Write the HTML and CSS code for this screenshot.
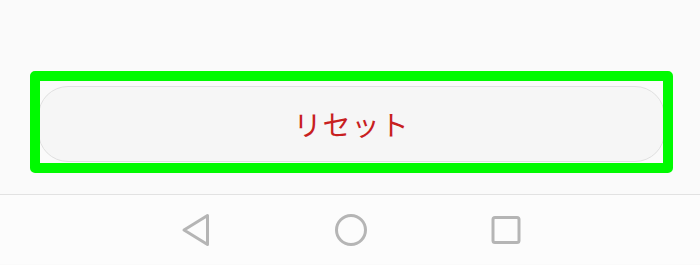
FILE: index.html
```html
<!DOCTYPE html>
<html lang="ja">
<head>
<meta charset="utf-8">
<title>リセット</title>
<link rel="stylesheet" href="styles.css">
</head>
<body>
<main class="content">
  <div class="frame">
    <button class="reset">リセット</button>
  </div>
</main>
<nav class="navbar">
  <svg class="nav-icon" width="36" height="36" viewBox="0 0 36 36" aria-label="戻る">
    <path d="M6 18 L29.5 3.5 L29.5 32.5 Z" fill="none" stroke="#b5b5b5" stroke-width="3" stroke-linejoin="round"/>
  </svg>
  <svg class="nav-icon" width="36" height="36" viewBox="0 0 36 36" aria-label="ホーム">
    <circle cx="18" cy="18" r="14.5" fill="none" stroke="#b5b5b5" stroke-width="3"/>
  </svg>
  <svg class="nav-icon" width="36" height="36" viewBox="0 0 36 36" aria-label="履歴">
    <rect x="5" y="5.5" width="26" height="25" rx="2" fill="none" stroke="#b5b5b5" stroke-width="3"/>
  </svg>
</nav>
</body>
</html>
```
FILE: styles.css
```css
html, body {
  margin: 0;
  padding: 0;
}
body {
  width: 700px;
  height: 265px;
  background: #fafafa;
  font-family: "Noto Sans CJK JP", "Noto Sans", sans-serif;
  overflow: hidden;
}
.content {
  height: 195px;
  box-sizing: border-box;
  padding: 71px 0 0 30px;
  border-bottom: 1px solid #e2e2e2;
}
.frame {
  width: 643px;
  height: 102px;
  box-sizing: border-box;
  border: 10px solid #00fa00;
  border-radius: 5px;
  padding: 5px 0 1px;
  overflow: hidden;
  display: flex;
}
.reset {
  flex: none;
  width: 627px;
  height: 76px;
  margin: 0 -2px;
  box-sizing: border-box;
  border: 1px solid #e0e0e0;
  border-radius: 30px;
  background: #f6f6f6;
  color: #c8201f;
  font-family: "Noto Sans CJK JP", "Noto Sans", sans-serif;
  font-size: 28px;
  letter-spacing: 1px;
  padding: 0;
  line-height: 1;
}
.navbar {
  height: 69px;
  background: #fcfcfc;
  display: flex;
  justify-content: center;
  align-items: center;
  gap: 119px;
  padding-left: 1px;
}
.nav-icon {
  display: block;
}
```
